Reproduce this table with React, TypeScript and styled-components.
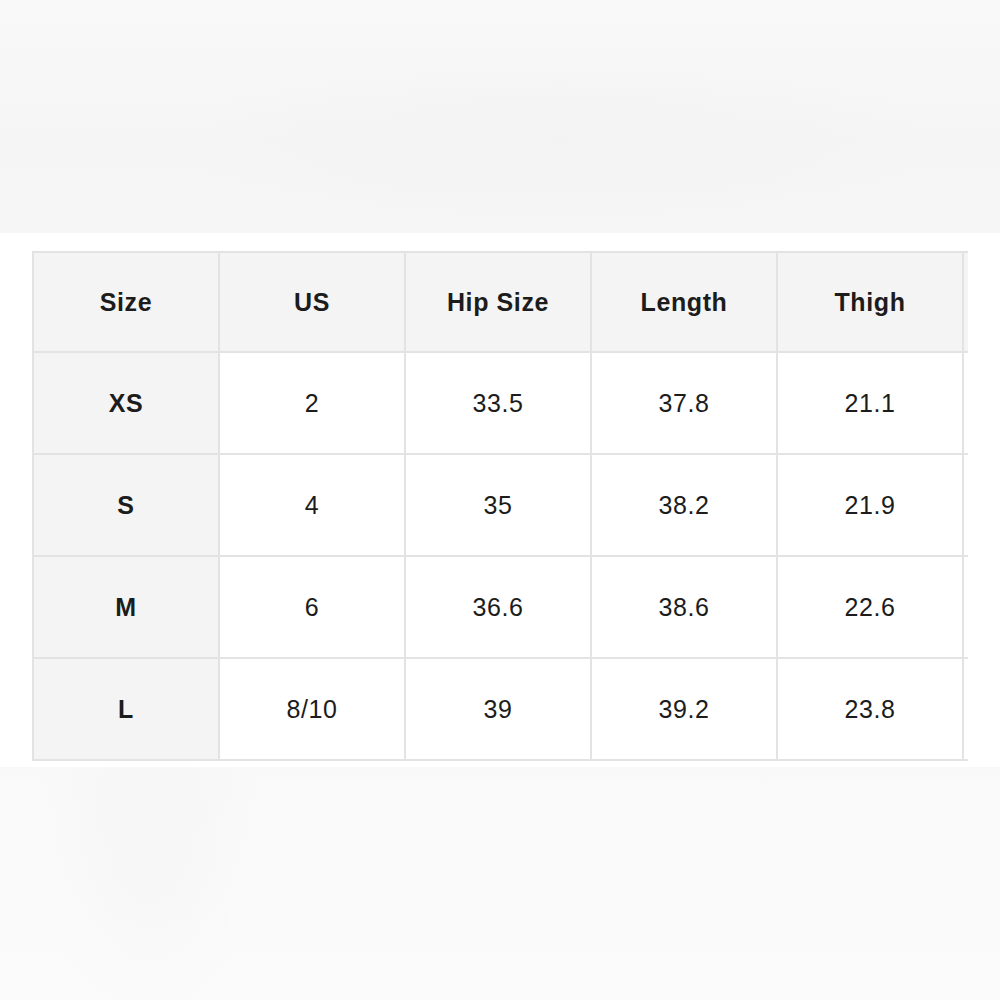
import React from "react";
import styled, { createGlobalStyle } from "styled-components";

const Global = createGlobalStyle`
  html, body { margin: 0; padding: 0; background: #ffffff; }
  body { font-family: "Liberation Sans", Arial, Helvetica, sans-serif; }
`;

const Page = styled.div`
  width: 1000px;
  height: 1000px;
  display: flex;
  flex-direction: column;
  background: #ffffff;
  overflow: hidden;
`;

const TopBand = styled.div`
  height: 233px;
  flex: none;
  background:
    radial-gradient(ellipse 380px 90px at 560px 140px, #f3f3f3 0%, rgba(243,243,243,0) 100%),
    linear-gradient(180deg, #f9f9f9 0%, #f5f5f5 60%, #f6f6f6 100%);
`;

const BottomBand = styled.div`
  flex: 1;
  background:
    radial-gradient(ellipse 110px 200px at 150px 60px, #f6f6f6 0%, rgba(246,246,246,0) 100%),
    linear-gradient(180deg, #f9f9f9 0%, #fbfbfb 100%);
`;

const Middle = styled.div`
  height: 534px;
  flex: none;
  padding: 18px 0 0 32px;
  box-sizing: border-box;
  background: #ffffff;
`;

const Clip = styled.div`
  width: 936px;
  overflow: hidden;
`;

const Table = styled.table`
  border-collapse: collapse;
  table-layout: fixed;
  width: ${6 * 186}px;
  color: #1c1c1c;
`;

const Cell = styled.td<{ $head?: boolean }>`
  width: 186px;
  height: 100px;
  box-sizing: border-box;
  border: 2px solid #e3e3e3;
  background: ${(p) => (p.$head ? "#f4f4f4" : "#ffffff")};
  text-align: center;
  vertical-align: middle;
  font-size: 25px;
  letter-spacing: 0.6px;
  font-weight: ${(p) => (p.$head ? 700 : 400)};
  padding: 0;
`;

const HeadRow = styled.tr`
  height: 100px;
`;

const Row = styled.tr`
  height: 102px;
`;

const headers = ["Size", "US", "Hip Size", "Length", "Thigh", ""];
const rows = [
  ["XS", "2", "33.5", "37.8", "21.1", ""],
  ["S", "4", "35", "38.2", "21.9", ""],
  ["M", "6", "36.6", "38.6", "22.6", ""],
  ["L", "8/10", "39", "39.2", "23.8", ""],
];

export default function App() {
  return (
    <Page>
      <Global />
      <TopBand />
      <Middle>
        <Clip>
          <Table>
            <thead>
              <HeadRow>
                {headers.map((h, i) => (
                  <Cell as="th" key={i} $head>
                    {h}
                  </Cell>
                ))}
              </HeadRow>
            </thead>
            <tbody>
              {rows.map((r) => (
                <Row key={r[0]}>
                  {r.map((v, i) => (
                    <Cell key={i} $head={i === 0}>
                      {v}
                    </Cell>
                  ))}
                </Row>
              ))}
            </tbody>
          </Table>
        </Clip>
      </Middle>
      <BottomBand />
    </Page>
  );
}
